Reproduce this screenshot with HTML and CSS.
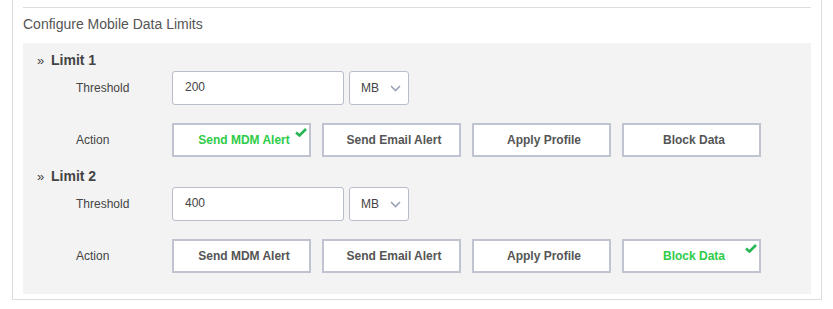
FILE: index.html
```html
<!DOCTYPE html>
<html>
<head>
<meta charset="utf-8">
<link rel="stylesheet" href="styles.css">
</head>
<body>
<div class="outer">
  <div class="rule"></div>
  <div class="title">Configure Mobile Data Limits</div>
  <div class="panel">
    <div class="limit">
      <div class="limit-head"><span class="chev">»</span>Limit 1</div>
      <div class="row row-threshold">
        <div class="label">Threshold</div>
        <div class="input">200</div>
        <div class="select">MB<svg class="caret" width="11" height="7" viewBox="0 0 11 7"><path d="M1 1 L5.5 5.5 L10 1" fill="none" stroke="#9aa3b5" stroke-width="1.6"/></svg></div>
      </div>
      <div class="row row-action">
        <div class="label">Action</div>
        <div class="actions">
          <div class="btn on">Send MDM Alert<svg class="tick" width="12" height="9" viewBox="0 0 12 9"><path d="M1 4.5 L4.5 7.5 L11 1" fill="none" stroke="#25b552" stroke-width="2.6"/></svg></div>
          <div class="btn">Send Email Alert</div>
          <div class="btn">Apply Profile</div>
          <div class="btn">Block Data</div>
        </div>
      </div>
    </div>
    <div class="limit">
      <div class="limit-head"><span class="chev">»</span>Limit 2</div>
      <div class="row row-threshold">
        <div class="label">Threshold</div>
        <div class="input">400</div>
        <div class="select">MB<svg class="caret" width="11" height="7" viewBox="0 0 11 7"><path d="M1 1 L5.5 5.5 L10 1" fill="none" stroke="#9aa3b5" stroke-width="1.6"/></svg></div>
      </div>
      <div class="row row-action">
        <div class="label">Action</div>
        <div class="actions">
          <div class="btn">Send MDM Alert</div>
          <div class="btn">Send Email Alert</div>
          <div class="btn">Apply Profile</div>
          <div class="btn on">Block Data<svg class="tick" width="12" height="9" viewBox="0 0 12 9"><path d="M1 4.5 L4.5 7.5 L11 1" fill="none" stroke="#25b552" stroke-width="2.6"/></svg></div>
        </div>
      </div>
    </div>
  </div>
</div>
</body>
</html>
```
FILE: styles.css
```css
* { box-sizing: border-box; }
html, body { margin: 0; padding: 0; background: #fff; }
body {
  font-family: "Liberation Sans", Arial, sans-serif;
  color: #555;
}
.outer {
  margin-left: 12px;
  width: 810px;
  padding: 7px 10px 5px 10px;
  border: 1px solid #dcdcdc;
  border-top: none;
}
.rule {
  height: 1px;
  background: #dddddd;
}
.title {
  padding-top: 6px;
  height: 35px;
  font-size: 14px;
  line-height: 20px;
  color: #555;
}
.panel {
  background: #f3f3f3;
  padding: 7px 0 21px 14px;
}
.limit { margin-bottom: 9px; }
.limit:last-child { margin-bottom: 0; }
.limit-head {
  height: 21px;
  font-size: 14px;
  line-height: 20px;
  font-weight: bold;
  color: #444;
}
.chev {
  display: inline-block;
  width: 14px;
  font-weight: normal;
  font-size: 13px;
  color: #444;
}
.row {
  display: flex;
  align-items: center;
}
.row-threshold { height: 34px; margin-bottom: 18px; }
.row-action { height: 34px; }
.label {
  width: 135px;
  padding-left: 39px;
  font-size: 12px;
  color: #444;
}
.input {
  width: 172px;
  height: 34px;
  border: 1px solid #b7bdcb;
  border-radius: 3px;
  background: #fff;
  padding-left: 12px;
  font-size: 12px;
  line-height: 30px;
  color: #444;
}
.select {
  margin-left: 5px;
  width: 60px;
  height: 34px;
  border: 1px solid #b7bdcb;
  border-radius: 3px;
  background: #fff;
  padding-left: 11px;
  font-size: 12px;
  line-height: 30px;
  color: #444;
  display: flex;
  align-items: center;
}
.caret { margin-left: 11px; }
.actions {
  display: flex;
  gap: 11px;
}
.btn {
  position: relative;
  width: 139px;
  height: 34px;
  border: 2px solid #c0c4d1;
  background: #fff;
  display: flex;
  align-items: center;
  justify-content: center;
  padding-left: 5px;
  font-size: 12px;
  font-weight: bold;
  color: #555;
}
.btn.on { color: #2ecc47; }
.tick {
  position: absolute;
  right: 2px;
  top: 3px;
}
```
